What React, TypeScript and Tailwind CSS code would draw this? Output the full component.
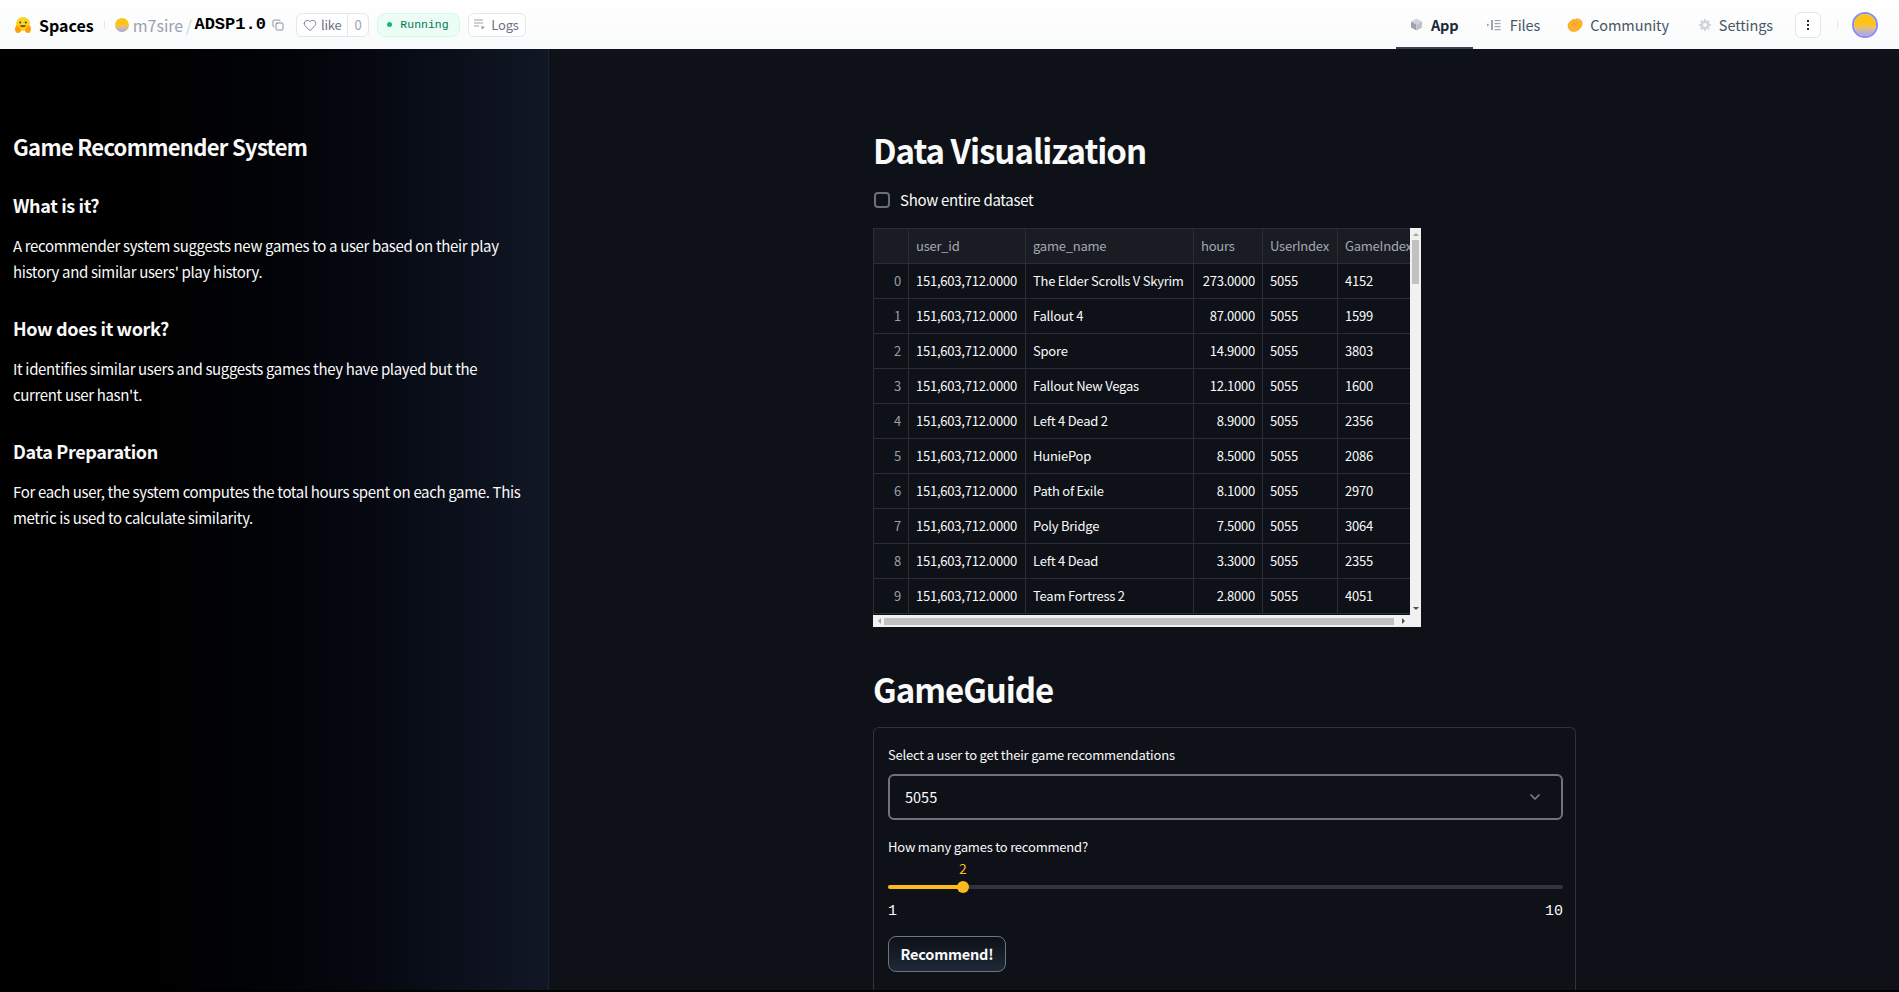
import { Copy, Heart, ChevronDown } from "lucide-react"

const SANS = "font-['Noto_Sans_CJK_SC','Noto_Sans',sans-serif]"

const ROWS = [
  ["0", "The Elder Scrolls V Skyrim", "273.0000", "4152"],
  ["1", "Fallout 4", "87.0000", "1599"],
  ["2", "Spore", "14.9000", "3803"],
  ["3", "Fallout New Vegas", "12.1000", "1600"],
  ["4", "Left 4 Dead 2", "8.9000", "2356"],
  ["5", "HuniePop", "8.5000", "2086"],
  ["6", "Path of Exile", "8.1000", "2970"],
  ["7", "Poly Bridge", "7.5000", "3064"],
  ["8", "Left 4 Dead", "3.3000", "2355"],
  ["9", "Team Fortress 2", "2.8000", "4051"],
]

function HfLogo() {
  return (
    <svg width="18" height="18" viewBox="0 0 18 18" className="shrink-0">
      <circle cx="9" cy="8" r="7" fill="#ffd21e" />
      <circle cx="6.2" cy="6.5" r="1" fill="#3a3b45" />
      <circle cx="11.8" cy="6.5" r="1" fill="#3a3b45" />
      <path d="M5.8 9.2c.8 2.6 5.6 2.6 6.4 0z" fill="#7a3b2e" />
      <path d="M1 13c0-2.5 1.5-4 2.5-3.5L7 13.500c.5 2-1 3.500-3 3.500S1 15 1 13z" fill="#ff9d0b" />
      <path d="M17 13c0-2.500-1.500-4-2.500-3.500L11 13.500c-.5 2 1 3.500 3 3.500s3-2 3-4z" fill="#ff9d0b" />
    </svg>
  )
}

function Avatar({ size }: { size: string }) {
  return <div className={`${size} shrink-0 rounded-full bg-gradient-to-b from-[#fcc419] from-50% to-[#a5a0f0]`} />
}

function CubeIcon() {
  return (
    <svg width="13" height="13" viewBox="0 0 13 13">
      <path d="M6.500.5l5.500 3-5.500 3-5.500-3z" fill="#d1d5db" />
      <path d="M1 3.500l5.500 3v6l-5.500-3z" fill="#9ca3af" />
      <path d="M12 3.500l-5.500 3v6l5.500-3z" fill="#bcc1c9" />
    </svg>
  )
}

function FilesIcon() {
  return (
    <svg width="14" height="12" viewBox="0 0 14 12" fill="#9ca3af">
      <path d="M0 4.500l2.500 1.500L0 7.500z" />
      <rect x="4" y="1" width="2" height="10" />
      <rect x="7.500" y="1" width="6" height="1.200" />
      <rect x="7.500" y="4" width="6" height="1.200" />
      <rect x="7.500" y="7" width="6" height="1.200" />
      <rect x="7.500" y="10" width="6" height="1.200" />
    </svg>
  )
}

function ClapIcon() {
  return (
    <svg width="16" height="14" viewBox="0 0 16 14">
      <path d="M1 7.500C1 5 4 2.500 6 1.500c1-.5 2 0 2.500 0 1-1 2.500-1 3.500 0 1.500 0 2.500 1 3 2.500.5 2.500-.5 5.500-3 7.500-2 1.800-5.500 2.500-8 1.500C2 12 1 10 1 7.500z" fill="#ffb02e" stroke="#f59e0b" strokeWidth=".6" />
      <path d="M6 4l3.500 3.500M8.500 3l3 3M4.500 6l3 3" stroke="#e88f0c" strokeWidth=".7" />
    </svg>
  )
}

function GearIcon() {
  return (
    <svg width="12" height="12" viewBox="0 0 12 12">
      <circle cx="6" cy="6" r="3.200" fill="none" stroke="#d1d5db" strokeWidth="2.600" />
      <path d="M6 0v2M6 10v2M0 6h2M10 6h2M1.800 1.800l1.400 1.400M8.800 8.800l1.400 1.400M1.800 10.200l1.400-1.400M8.800 3.200l1.400-1.400" stroke="#d1d5db" strokeWidth="2" />
    </svg>
  )
}

function LogsIcon() {
  return (
    <svg width="12" height="11" viewBox="0 0 12 11" fill="#9ca3af">
      <rect x="0" y="0.500" width="9" height="1" />
      <rect x="0" y="3.500" width="9" height="1" />
      <rect x="0" y="6.500" width="5" height="1" />
      <path d="M7.500 6.500l3.500 2-3.500 2z" />
    </svg>
  )
}

function Header() {
  return (
    <header className={`flex h-[49px] shrink-0 items-center bg-gradient-to-b from-white to-[#f9fafb] pl-[14px] ${SANS}`}>
      <HfLogo />
      <span className="ml-[7px] text-[16px] leading-[20px] font-bold text-black">Spaces</span>
      <span className="ml-[10px] h-[8px] w-px bg-gray-200" />
      <div className="ml-[10px] flex items-center">
        <Avatar size="h-[14px] w-[14px]" />
        <span className="ml-[4px] text-[16px] leading-[20px] text-gray-400">m7sire</span>
        <span className="mx-[2.500px] text-[16px] leading-[20px] text-gray-300">/</span>
        <span className="font-['Liberation_Mono',monospace] text-[17px] leading-[20px] font-bold text-black">ADSP1.0</span>
        <Copy className="ml-[6px] h-[12px] w-[12px] text-gray-500" strokeWidth={1.500} />
      </div>
      <div className="ml-[12px] flex h-[24px] items-center rounded-md border border-gray-200 bg-white text-[13px] leading-[16px] tracking-[-0.2px] text-gray-500">
        <span className="flex items-center gap-[4px] px-[6px]">
          <Heart className="h-[14px] w-[14px]" strokeWidth={1.500} />
          like
        </span>
        <span className="flex h-full items-center border-l border-gray-200 px-[6px] text-gray-400">0</span>
      </div>
      <div className="ml-[8px] flex h-[24px] w-[83px] items-center justify-center gap-[8px] rounded-lg border border-[#d1fae5] bg-[#ecfdf5] font-['Liberation_Mono',monospace] text-[11.500px] leading-[16px] text-[#047857]">
        <span className="h-[5px] w-[5px] rounded-full bg-[#10b981]" />
        Running
      </div>
      <div className="ml-[8px] flex h-[24px] w-[58px] items-center justify-center gap-[5px] rounded-md border border-gray-200 bg-white text-[13px] leading-[16px] tracking-[-0.2px] text-gray-500">
        <LogsIcon />
        Logs
      </div>
      <nav className="ml-auto flex h-full items-center text-[14.500px] leading-[20px] tracking-[-0.1px] text-gray-600">
        <div className="flex h-full w-[77px] items-center justify-center gap-[8px] border-b-2 border-[#374151] pt-[2px] font-semibold text-gray-800">
          <CubeIcon />
          App
        </div>
        <div className="ml-[14px] flex items-center gap-[9px]">
          <FilesIcon />
          Files
        </div>
        <div className="ml-[27px] flex items-center gap-[7px]">
          <ClapIcon />
          Community
        </div>
        <div className="ml-[30px] flex items-center gap-[8px]">
          <GearIcon />
          Settings
        </div>
        <div className="ml-[22px] flex h-[26px] w-[26px] items-center justify-center rounded-md border border-gray-200 bg-white">
          <span className="flex flex-col gap-[2px]">
            <span className="h-[2px] w-[2px] bg-gray-800" />
            <span className="h-[2px] w-[2px] bg-gray-800" />
            <span className="h-[2px] w-[2px] bg-gray-800" />
          </span>
        </div>
        <span className="ml-[16px] h-[8px] w-px bg-gray-200" />
        <div className="mr-[21px] ml-[14px] rounded-full border-2 border-[#818cf8]">
          <Avatar size="h-[22px] w-[22px]" />
        </div>
      </nav>
    </header>
  )
}

function Sidebar() {
  const h2 = "text-[18px] leading-[30px] font-semibold tracking-[-0.35px]"
  const p = "mt-[13px] text-[15px] leading-[25.600px] tracking-[-0.35px]"
  return (
    <aside className="flex w-[549px] shrink-0 flex-col border-r border-[#1c2433] bg-gradient-to-r from-black to-[#111725] pt-[82px] pr-[22px] pl-[13px] text-[#fafafa]">
      <h1 className="text-[22px] leading-[30px] font-semibold tracking-[-0.7px]">Game Recommender System</h1>
      <h2 className={`mt-[29px] ${h2}`}>What is it?</h2>
      <p className={p}>
        A recommender system suggests new games to a user based on their play history and similar users' play history.
      </p>
      <h2 className={`mt-[29px] ${h2}`}>How does it work?</h2>
      <p className={p}>
        It identifies similar users and suggests games they have played but the current user hasn't.
      </p>
      <h2 className={`mt-[29px] ${h2}`}>Data Preparation</h2>
      <p className={p}>
        For each user, the system computes the total hours spent on each game. This metric is used to calculate similarity.
      </p>
    </aside>
  )
}

function DataTable() {
  const cell = "flex h-[35px] items-center whitespace-nowrap border-r border-b border-[#2a2d35] px-[7px]"
  return (
    <div className="mt-[16px] w-[548px] bg-[#f1f1f1]">
      <div className="flex">
        <div className="h-[387px] w-[537px] overflow-hidden border-l border-[#2a2d35] bg-[#0e1117]">
          <div className="grid w-[560px] grid-cols-[35px_117px_168px_69px_75px_96px] border-t border-[#2a2d35] text-[13px] leading-[16px] tracking-[-0.23px] text-[#fafafa]">
            <div className={`${cell} bg-[#1a1c24]`} />
            {["user_id", "game_name", "hours", "UserIndex", "GameIndex"].map((h) => (
              <div key={h} className={`${cell} bg-[#1a1c24] text-[#a3a8b4]`}>{h}</div>
            ))}
            {ROWS.map(([idx, game, hours, gameIdx]) => (
              <div key={idx} className="contents">
                <div className={`${cell} justify-end text-[#9a9ea8]`}>{idx}</div>
                <div className={cell}>151,603,712.0000</div>
                <div className={cell}>{game}</div>
                <div className={`${cell} justify-end`}>{hours}</div>
                <div className={cell}>5055</div>
                <div className={cell}>{gameIdx}</div>
              </div>
            ))}
          </div>
        </div>
        <div className="flex w-[11px] flex-col items-center justify-between py-[5px]">
          <div className="flex w-full flex-col items-center">
            <span className="h-0 w-0 border-x-[3px] border-b-[3px] border-x-transparent border-b-[#a3a3a3]" />
            <div className="mt-[4px] h-[44px] w-[7px] bg-[#c1c1c1]" />
          </div>
          <span className="h-0 w-0 border-x-[3px] border-t-[3px] border-x-transparent border-t-[#505050]" />
        </div>
      </div>
      <div className="flex h-[12px] w-[537px] items-center px-[5px]">
        <span className="h-0 w-0 border-y-[3px] border-r-[3px] border-y-transparent border-r-[#a3a3a3]" />
        <div className="mr-[8px] ml-[3px] h-[7px] flex-1 bg-[#c1c1c1]" />
        <span className="h-0 w-0 border-y-[3px] border-l-[3px] border-y-transparent border-l-[#505050]" />
      </div>
    </div>
  )
}

function GameGuide() {
  return (
    <section className="mt-[15px] h-[290px] w-[703px] rounded-t-md border border-b-0 border-[#30333b] pt-[16px] pr-[12px] pl-[14px] text-[#fafafa]">
      <div className="text-[13px] leading-[22px] tracking-[-0.2px]">Select a user to get their game recommendations</div>
      <div className="mt-[8px] flex h-[46px] items-center justify-between rounded-md border-2 border-[#6f7280] pr-[18px] pl-[15px] text-[14.500px]">
        5055
        <ChevronDown className="h-[16px] w-[16px] text-[#7d808a]" strokeWidth={2.500} />
      </div>
      <div className="mt-[16px] text-[13px] leading-[22px] tracking-[-0.2px]">How many games to recommend?</div>
      <div className="relative mt-[27px] h-[4px] rounded-full bg-[#31333f]">
        <div className="h-full w-[75px] rounded-full bg-[#fdba1a]" />
        <div className="absolute top-[-4px] left-[69px] h-[12px] w-[12px] rounded-full bg-[#fdba1a]" />
        <div className="absolute top-[-27px] left-[71px] text-[14px] leading-[20px] text-[#fdba1a]">2</div>
      </div>
      <div className="mt-[13px] flex justify-between font-['Liberation_Mono',monospace] text-[15px] leading-[20px]">
        <span>1</span>
        <span>10</span>
      </div>
      <button className="mt-[14px] flex h-[36px] w-[118px] items-center justify-center rounded-lg border border-[#6f7280] bg-gradient-to-b from-[#0e1117] to-[#1f2937] text-[14.500px] font-semibold tracking-[-0.2px]">
        Recommend!
      </button>
    </section>
  )
}

export default function App() {
  return (
    <div className={`h-[992px] overflow-hidden bg-black ${SANS}`}>
      <div className="flex h-[990px] flex-col overflow-hidden">
        <Header />
        <div className="flex min-h-0 flex-1">
          <Sidebar />
          <main className="flex-1 overflow-hidden bg-[#0e1117] pt-[78px] pl-[324px] text-[#fafafa]">
            <h2 className="text-[33px] leading-[46px] font-semibold tracking-[-1px]">Data Visualization</h2>
            <label className="mt-[15px] ml-[1px] flex h-[24px] items-center gap-[10px] text-[15px] leading-[24px] tracking-[-0.3px]">
              <span className="h-[16px] w-[16px] rounded-[4px] border-2 border-[#6b6f7a]" />
              Show entire dataset
            </label>
            <DataTable />
            <h2 className="mt-[39px] text-[33px] leading-[46px] font-semibold tracking-[-1px]">GameGuide</h2>
            <GameGuide />
          </main>
        </div>
      </div>
    </div>
  )
}
